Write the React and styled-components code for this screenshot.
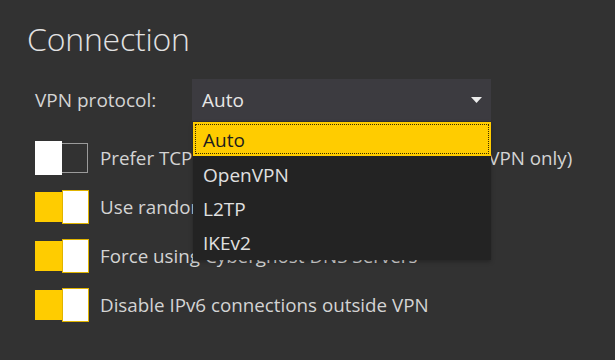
import React from "react"
import styled, { createGlobalStyle, css } from "styled-components"

const GlobalStyle = createGlobalStyle`
  html, body {
    margin: 0;
    padding: 0;
    background: #323232;
  }
  body {
    font-family: "Open Sans", "Noto Sans", sans-serif;
    color: #d6d6d6;
  }
`

const Page = styled.div`
  width: 615px;
  height: 360px;
  box-sizing: border-box;
  padding: 17px 0 0 35px;
  overflow: hidden;
`

const Title = styled.h1`
  margin: 0 0 0 -8px;
  font-size: 32px;
  font-weight: 300;
  line-height: 44px;
  color: #e2e2e2;
  letter-spacing: -0.2px;
`

const ProtocolRow = styled.div`
  display: flex;
  align-items: center;
  margin-top: 18px;
`

const FieldLabel = styled.span`
  width: 157px;
  font-size: 19px;
  color: #d4d4d4;
`

const ComboWrap = styled.div`
  position: relative;
  z-index: 2;
`

const Combo = styled.div`
  width: 299px;
  height: 42px;
  box-sizing: border-box;
  padding: 0 10px;
  display: flex;
  align-items: center;
  justify-content: space-between;
  background: #3c3b40;
  font-size: 19px;
  color: #e6e6e6;
`

const Arrow = styled.svg`
  width: 11px;
  height: 6px;
  margin-right: -1px;
`

const List = styled.ul`
  position: absolute;
  top: 43px;
  left: 1px;
  width: 298px;
  margin: 0;
  padding: 0 0 2px;
  list-style: none;
  background: #232323;
  box-shadow: 0 2px 4px rgba(0, 0, 0, 0.25);
`

const Option = styled.li`
  height: 34px;
  box-sizing: border-box;
  display: flex;
  align-items: center;
  padding: 3px 0 0 10px;
  font-size: 19px;
  color: #e0e0e0;
  ${({ selected }) =>
    selected &&
    css`
      padding-top: 1px;
      background: #ffcc00;
      color: #1e1e1e;
      outline: 1px dotted #3a2e00;
      outline-offset: -3px;
    `}
`

const Settings = styled.div`
  display: flex;
  flex-direction: column;
  gap: 17px;
  margin-top: 21px;
`

const SettingRow = styled.div`
  display: flex;
  align-items: center;
  gap: 12px;
  height: 32px;
`

const Track = styled.div`
  width: 53px;
  height: 30px;
  box-sizing: border-box;
  display: flex;
  align-items: center;
  flex-shrink: 0;
  ${({ on }) =>
    on
      ? css`
          background: #ffcc00;
          justify-content: flex-end;
        `
      : css`
          border: 1px solid #9b9b9b;
          justify-content: flex-start;
        `}
`

const Thumb = styled.div`
  width: 27px;
  height: 34px;
  box-sizing: border-box;
  background: #ffffff;
  ${({ on }) =>
    on
      ? css`
          border: 1px solid #e0b400;
          margin-right: -1px;
        `
      : css`
          margin-left: -1px;
        `}
`

const SettingText = styled.span`
  font-size: 18.8px;
  color: #d4d4d4;
  white-space: nowrap;
`

const options = ["Auto", "OpenVPN", "L2TP", "IKEv2"]

const settings = [
  { label: "Prefer TCP instead of UDP connection (OpenVPN only)", on: false },
  { label: "Use random port to connect", on: true },
  { label: "Force using Cyberghost DNS  Servers", on: true },
  { label: "Disable IPv6 connections outside VPN", on: true },
]

function Toggle({ on }) {
  return (
    <Track on={on}>
      <Thumb on={on} />
    </Track>
  )
}

export default function App() {
  return (
    <>
      <GlobalStyle />
      <Page>
        <Title>Connection</Title>
        <ProtocolRow>
          <FieldLabel>VPN protocol:</FieldLabel>
          <ComboWrap>
            <Combo>
              <span>Auto</span>
              <Arrow viewBox="0 0 11 6">
                <path d="M0 0 H11 L5.5 6 Z" fill="#ececec" />
              </Arrow>
            </Combo>
            <List>
              {options.map((o, i) => (
                <Option key={o} selected={i === 0}>
                  {o}
                </Option>
              ))}
            </List>
          </ComboWrap>
        </ProtocolRow>
        <Settings>
          {settings.map(s => (
            <SettingRow key={s.label}>
              <Toggle on={s.on} />
              <SettingText>{s.label}</SettingText>
            </SettingRow>
          ))}
        </Settings>
      </Page>
    </>
  )
}
